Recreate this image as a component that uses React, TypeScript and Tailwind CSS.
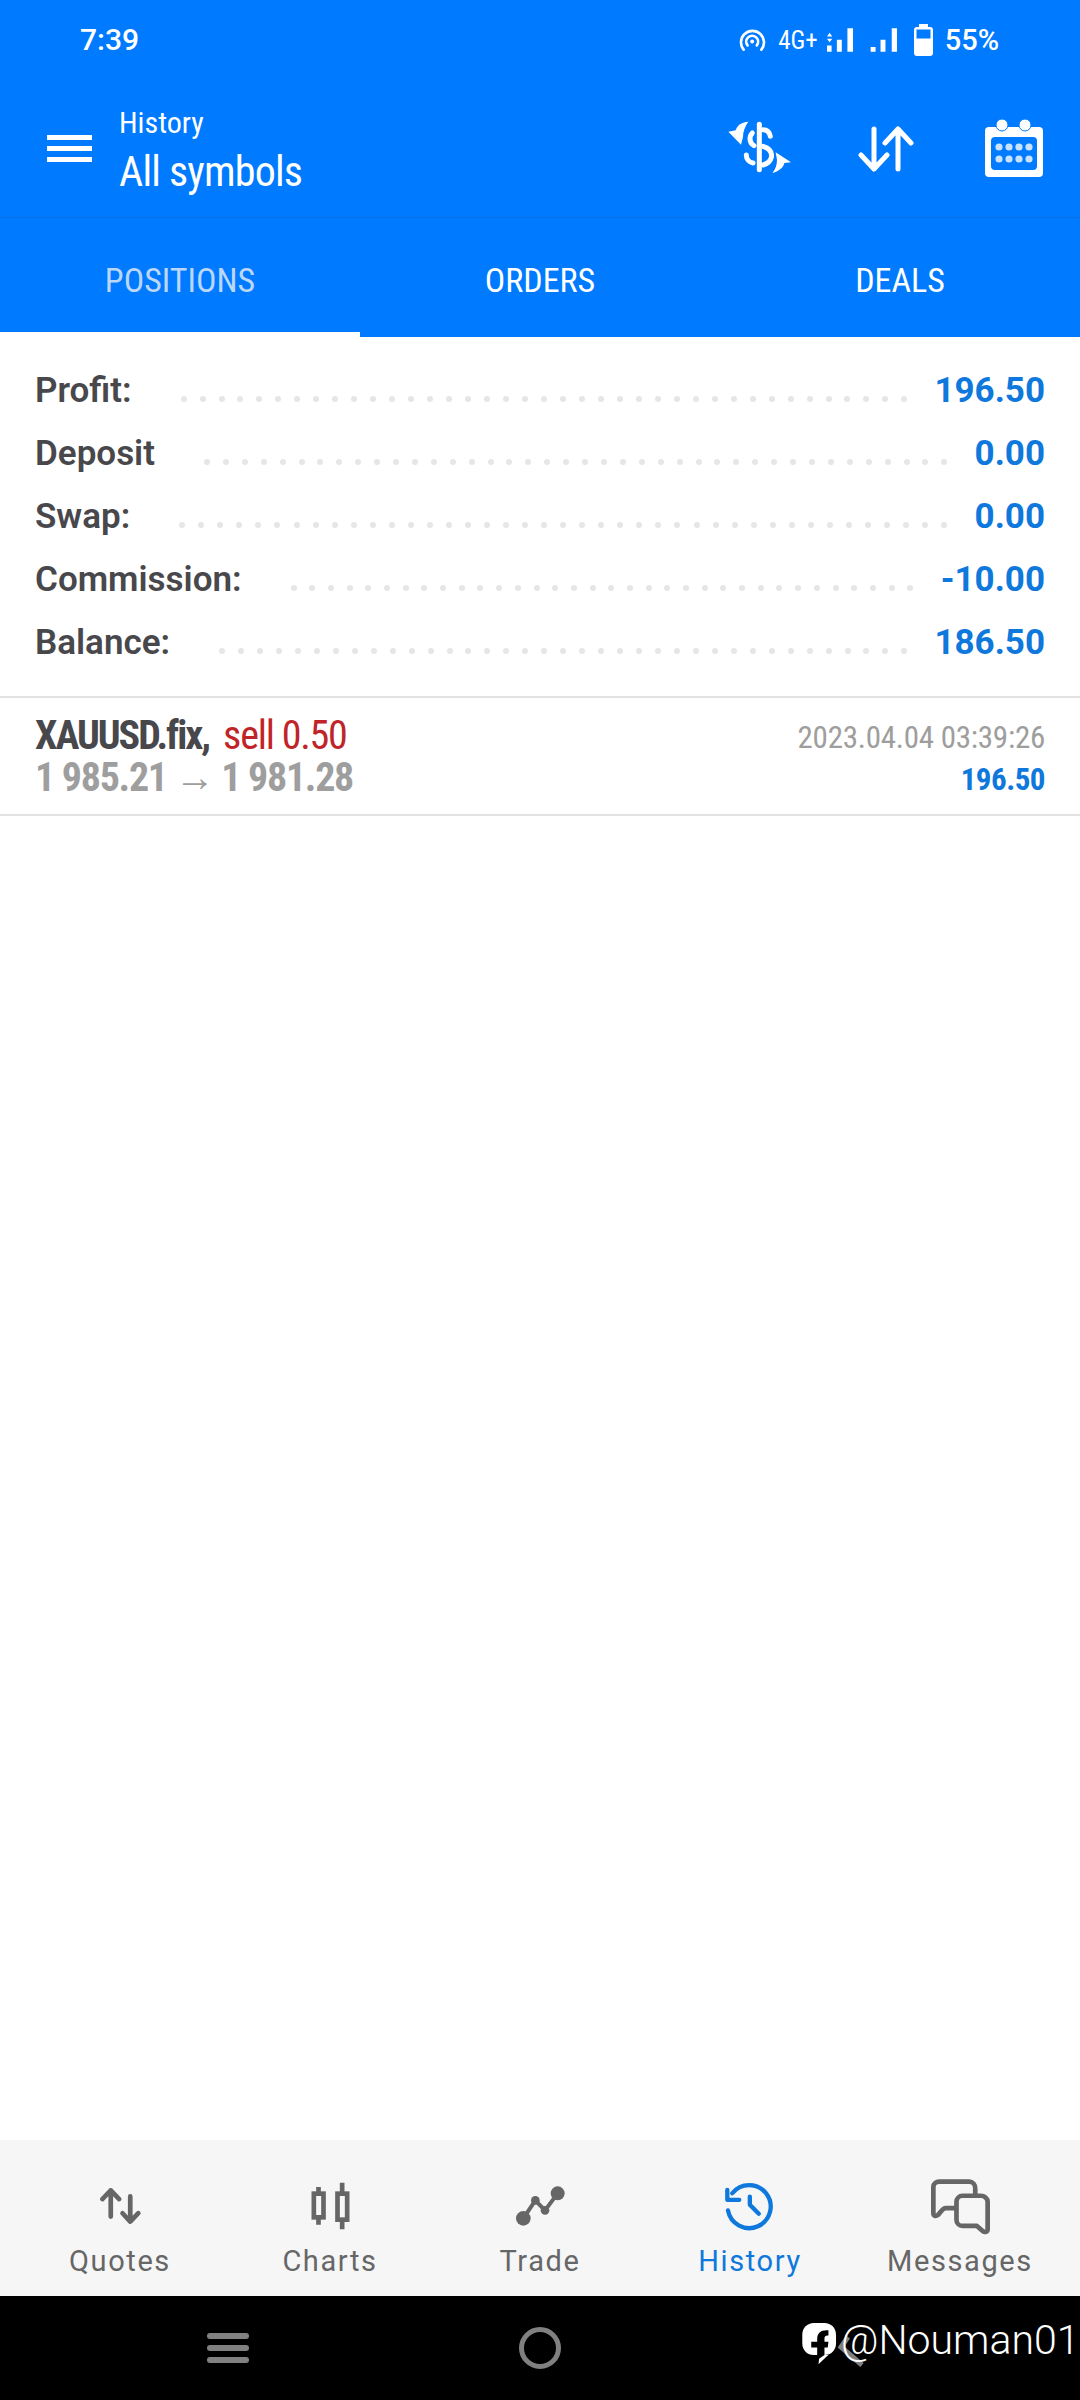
import React from 'react';

const roboto = 'font-["Roboto",sans-serif]';
const condensed = 'font-["Roboto",sans-serif] [font-stretch:75%]';

const summary = [
  { label: 'Profit:', value: '196.50', dots: 39 },
  { label: 'Deposit', value: '0.00', dots: 40 },
  { label: 'Swap:', value: '0.00', dots: 41 },
  { label: 'Commission:', value: '-10.00', dots: 34 },
  { label: 'Balance:', value: '186.50', dots: 37 },
];

const StatusIcons = () => (
  <div className="flex items-center">
    <svg width="27" height="23" viewBox="25 25 80 70" fill="none" stroke="white" strokeWidth="8" strokeLinecap="round" className="mr-[12px]">
      <path d="M38 88A35 35 0 1 1 92 88" />
      <path d="M50 75A18 18 0 1 1 78 75" />
      <circle cx="64" cy="63" r="6" fill="white" stroke="none" />
    </svg>
    <span className={`${condensed} mr-[8px] mt-[1px] text-[25px] leading-none text-white`}>4G+</span>
    <svg width="28" height="26" viewBox="275 22 85 78" fill="white" className="mr-[16px]">
      <path d="M278 50l8-11 8 11zM278 57h16l-8 11zM278 78h14v19h-14zM308 60h15v37h-15zM340 25h17v72h-17z" />
    </svg>
    <svg width="27" height="26" viewBox="408 22 82 78" fill="white" className="mr-[17px]">
      <path d="M410 82h15v15h-15zM440 60h15v37h-15zM474 25h16v72h-16z" />
    </svg>
    <svg width="19" height="32" viewBox="0 0 19 32" className="mr-[12px]">
      <path d="M5 0h9v3h2a3 3 0 0 1 3 3v23a3 3 0 0 1-3 3H3a3 3 0 0 1-3-3V6a3 3 0 0 1 3-3h2z" fill="white" />
      <rect x="2.500" y="5.500" width="14" height="9" fill="#007aff" />
    </svg>
    <span className={`${roboto} text-[29px] font-medium leading-none text-white`}>55%</span>
  </div>
);

const DollarIcon = () => (
  <svg width="64" height="56" viewBox="25 20 192 168" fill="none" stroke="white" strokeWidth="15" strokeLinecap="round">
    <path d="M119 36V172" />
    <path d="M130 52C142 52 150 60 152 72" />
    <path d="M98 62C88 72 88 92 103 100" />
    <path d="M130 102C150 108 158 120 155 135C152 148 140 155 130 158" />
    <path d="M80 128C80 140 88 150 100 152" />
    <g fill="white" stroke="none">
      <path d="M86 28C64 30 52 40 48 54L26 58L64 97L70 74C70 58 76 42 86 28Z" />
      <path d="M158 182C180 176 192 164 194 152L214 150L168 120L172 142C172 156 168 170 158 182Z" />
    </g>
  </svg>
);

const ArrowsIcon = () => (
  <svg width="56" height="46" viewBox="0 0 56 46" fill="none" stroke="white" strokeWidth="5" strokeLinecap="round" strokeLinejoin="round">
    <path d="M16 3v40M3 29l13 14 13-14" />
    <path d="M40 43V3M27 17L40 3l13 14" />
  </svg>
);

const CalendarIcon = () => (
  <svg width="58" height="58" viewBox="0 0 58 58">
    <path d="M4 8h50a4 4 0 0 1 4 4v42a4 4 0 0 1-4 4H4a4 4 0 0 1-4-4V12a4 4 0 0 1 4-4z" fill="white" />
    <circle cx="17" cy="6" r="6" fill="white" stroke="#007aff" strokeWidth="1" />
    <circle cx="40" cy="6" r="6" fill="white" stroke="#007aff" strokeWidth="1" />
    <rect x="6" y="18" width="46" height="33" rx="4" fill="#007aff" />
    {[14, 24, 34, 44].map((x) => (
      <g key={x} fill="#c9e2ff">
        <circle cx={x} cy="28" r="3.6" />
        <circle cx={x} cy="40" r="3.6" />
      </g>
    ))}
  </svg>
);

const QuotesIcon = () => (
  <svg width="43" height="38" viewBox="25 52 128 113" fill="none" stroke="#666" strokeWidth="14" strokeLinecap="round" strokeLinejoin="round">
    <path d="M60 140V62M35 88L60 62L85 88" />
    <path d="M118 80V155M95 130L118 155L142 130" />
  </svg>
);

const ChartsIcon = () => (
  <svg width="43" height="48" viewBox="655 40 128 144" fill="none" stroke="#666" strokeWidth="14">
    <rect x="669" y="75" width="29" height="71" />
    <path d="M683 55V75M683 146V168" />
    <rect x="740" y="75" width="29" height="78" />
    <path d="M754 42V75M754 153V182" />
  </svg>
);

const TradeIcon = () => (
  <svg width="49" height="40" viewBox="45 50 147 120" fill="#666" stroke="#666" strokeWidth="12">
    <path d="M67 147L103 93L132 123L170 72" fill="none" />
    <g stroke="none">
      <circle cx="67" cy="147" r="22" />
      <circle cx="103" cy="93" r="13" />
      <circle cx="132" cy="123" r="13" />
      <circle cx="170" cy="72" r="21" />
    </g>
  </svg>
);

const HistoryIcon = () => (
  <svg width="53" height="53" viewBox="670 30 160 160" fill="none" stroke="#0f78dc" strokeWidth="13" strokeLinecap="round" strokeLinejoin="round">
    <path d="M682 122A65 65 0 1 0 695 70" />
    <path d="M680 60V90H716" />
    <path d="M748 80V105L775 132" />
  </svg>
);

const MessagesIcon = () => (
  <svg width="62" height="57" viewBox="25 25 185 170" fill="none" stroke="#666" strokeWidth="14" strokeLinejoin="round">
    <path d="M108 115H75C65 115 58 130 52 135C45 140 38 138 38 130V52C38 42 46 36 56 36H145C155 36 163 44 163 56V78" />
    <path d="M125 78H180C190 78 200 86 200 96V178C200 186 192 188 186 184L168 168H125C115 168 107 160 107 150V96C107 86 115 78 125 78Z" />
  </svg>
);

const navItems = [
  { label: 'Quotes', icon: <QuotesIcon /> },
  { label: 'Charts', icon: <ChartsIcon /> },
  { label: 'Trade', icon: <TradeIcon /> },
  { label: 'History', icon: <HistoryIcon />, active: true },
  { label: 'Messages', icon: <MessagesIcon /> },
];

export default function App() {
  return (
    <div className={`relative flex h-[2400px] w-[1080px] flex-col overflow-hidden bg-white ${roboto}`}>
      <header className="h-[217px] shrink-0 bg-[#007aff]">
        <div className="flex h-[80px] items-center justify-between pl-[80px] pr-[81px]">
          <span className="text-[30px] font-medium leading-none text-white">7:39</span>
          <StatusIcons />
        </div>
        <div className="flex h-[137px] items-start pl-[47px] pr-[37px]">
          <div className="mt-[55px] flex w-[45px] flex-col gap-[6px]">
            <div className="h-[5px] bg-white" />
            <div className="h-[5px] bg-white" />
            <div className="h-[5px] bg-white" />
          </div>
          <div className={`ml-[27px] mt-[26px] text-white ${condensed}`}>
            <div className="text-[30px] leading-[34px]">History</div>
            <div className="mt-[7px] text-[42px] leading-[50px] tracking-[-0.8px]">All symbols</div>
          </div>
          <div className="ml-auto mt-[41px] flex items-center">
            <div className="-mt-[4px]"><DollarIcon /></div>
            <div className="ml-[66px]"><ArrowsIcon /></div>
            <div className="ml-[71px] -mt-[2px]"><CalendarIcon /></div>
          </div>
        </div>
      </header>

      <nav className={`grid h-[120px] shrink-0 grid-cols-3 border-t border-[#0a70e6] bg-[#007aff] ${condensed}`}>
        <div className="flex flex-col items-center border-b-[5px] border-white pt-[42px] text-[34px] leading-[40px] text-[#bcd6f8]">POSITIONS</div>
        <div className="pt-[42px] text-center text-[34px] leading-[40px] text-white">ORDERS</div>
        <div className="pt-[42px] text-center text-[34px] leading-[40px] text-white">DEALS</div>
      </nav>

      <main className="flex-1">
        <section className="border-b-2 border-[#e2e2e2] px-[35px] pb-[21px] pt-[23px]">
          {summary.map((row) => (
            <div key={row.label} className="flex h-[63px] items-center text-[35px] font-semibold">
              <span className="text-[#48484c]">{row.label}</span>
              <div className="ml-[49px] mr-[27px] mt-[15px] flex flex-1 justify-between">
                {Array.from({ length: row.dots }).map((_, i) => (
                  <span key={i} className="h-[6px] w-[6px] rounded-full bg-[#e6e6e6]" />
                ))}
              </div>
              <span className="font-bold text-[#0f78dc]">{row.value}</span>
            </div>
          ))}
        </section>
        <section className="flex h-[118px] justify-between border-b-2 border-[#e2e2e2] px-[35px] pt-[17px]">
          <div className={`${condensed} text-[40px] font-bold leading-[42px]`}>
            <div className="text-[#48484c]">
              <span className="tracking-[-2px]">XAUUSD.fix,</span>
              <span className="ml-[14px] font-normal tracking-[-1.2px] text-[#c02428]">sell 0.50</span>
            </div>
            <div className="tracking-[-1.3px] text-[#9e9e9e]">1 985.21 <span className="font-normal">→</span> 1 981.28</div>
          </div>
          <div className={`${condensed} pt-[2px] text-right text-[31px]`}>
            <div className="leading-[42px] tracking-[-0.25px] text-[#9e9e9e]">2023.04.04 03:39:26</div>
            <div className="font-bold leading-[42px] tracking-[-0.5px] text-[#0f78dc]">196.50</div>
          </div>
        </section>
      </main>

      <nav className="grid h-[156px] shrink-0 grid-cols-5 bg-[#f6f6f6] px-[15px]">
        {navItems.map((item) => (
          <div key={item.label} className="flex flex-col items-center">
            <div className="flex h-[96px] items-center pt-[36px]">{item.icon}</div>
            <span className={`mt-[7px] text-[29px] leading-[36px] tracking-[1.6px] ${item.active ? 'text-[#0f78dc]' : 'text-[#666]'}`}>
              {item.label}
            </span>
          </div>
        ))}
      </nav>

      <footer className="relative flex h-[104px] shrink-0 items-center bg-black">
        <div className="ml-[207px] flex w-[42px] flex-col gap-[6px]">
          <div className="h-[6px] rounded-full bg-[#808080]" />
          <div className="h-[6px] rounded-full bg-[#808080]" />
          <div className="h-[6px] rounded-full bg-[#808080]" />
        </div>
        <div className="ml-[270px] h-[42px] w-[42px] rounded-full border-[5px] border-[#808080]" />
        <svg width="32" height="40" viewBox="0 0 32 40" className="absolute left-[836px] top-[34px]" fill="none" stroke="#808080" strokeWidth="5">
          <path d="M12 7L5 17L26 35" />
        </svg>
        <div className="absolute left-[801px] top-[26px] flex items-start">
          <svg width="37" height="43" viewBox="30 35 110 130">
            <path d="M68 38H100C120 38 135 53 135 73V100C135 120 120 135 100 135H112C100 145 90 155 82 163L85 135H68C48 135 33 120 33 100V73C33 53 48 38 68 38Z" fill="white" />
            <path d="M78 150V112H60V95H78V85C78 68 90 58 112 60V76C104 75 100 78 100 85V95H112L110 112H100V135Z" fill="black" />
          </svg>
          <span className="ml-[3px] -mt-[2px] text-[41px] font-light leading-[40px] text-white">@Nouman01</span>
        </div>
      </footer>
    </div>
  );
}
